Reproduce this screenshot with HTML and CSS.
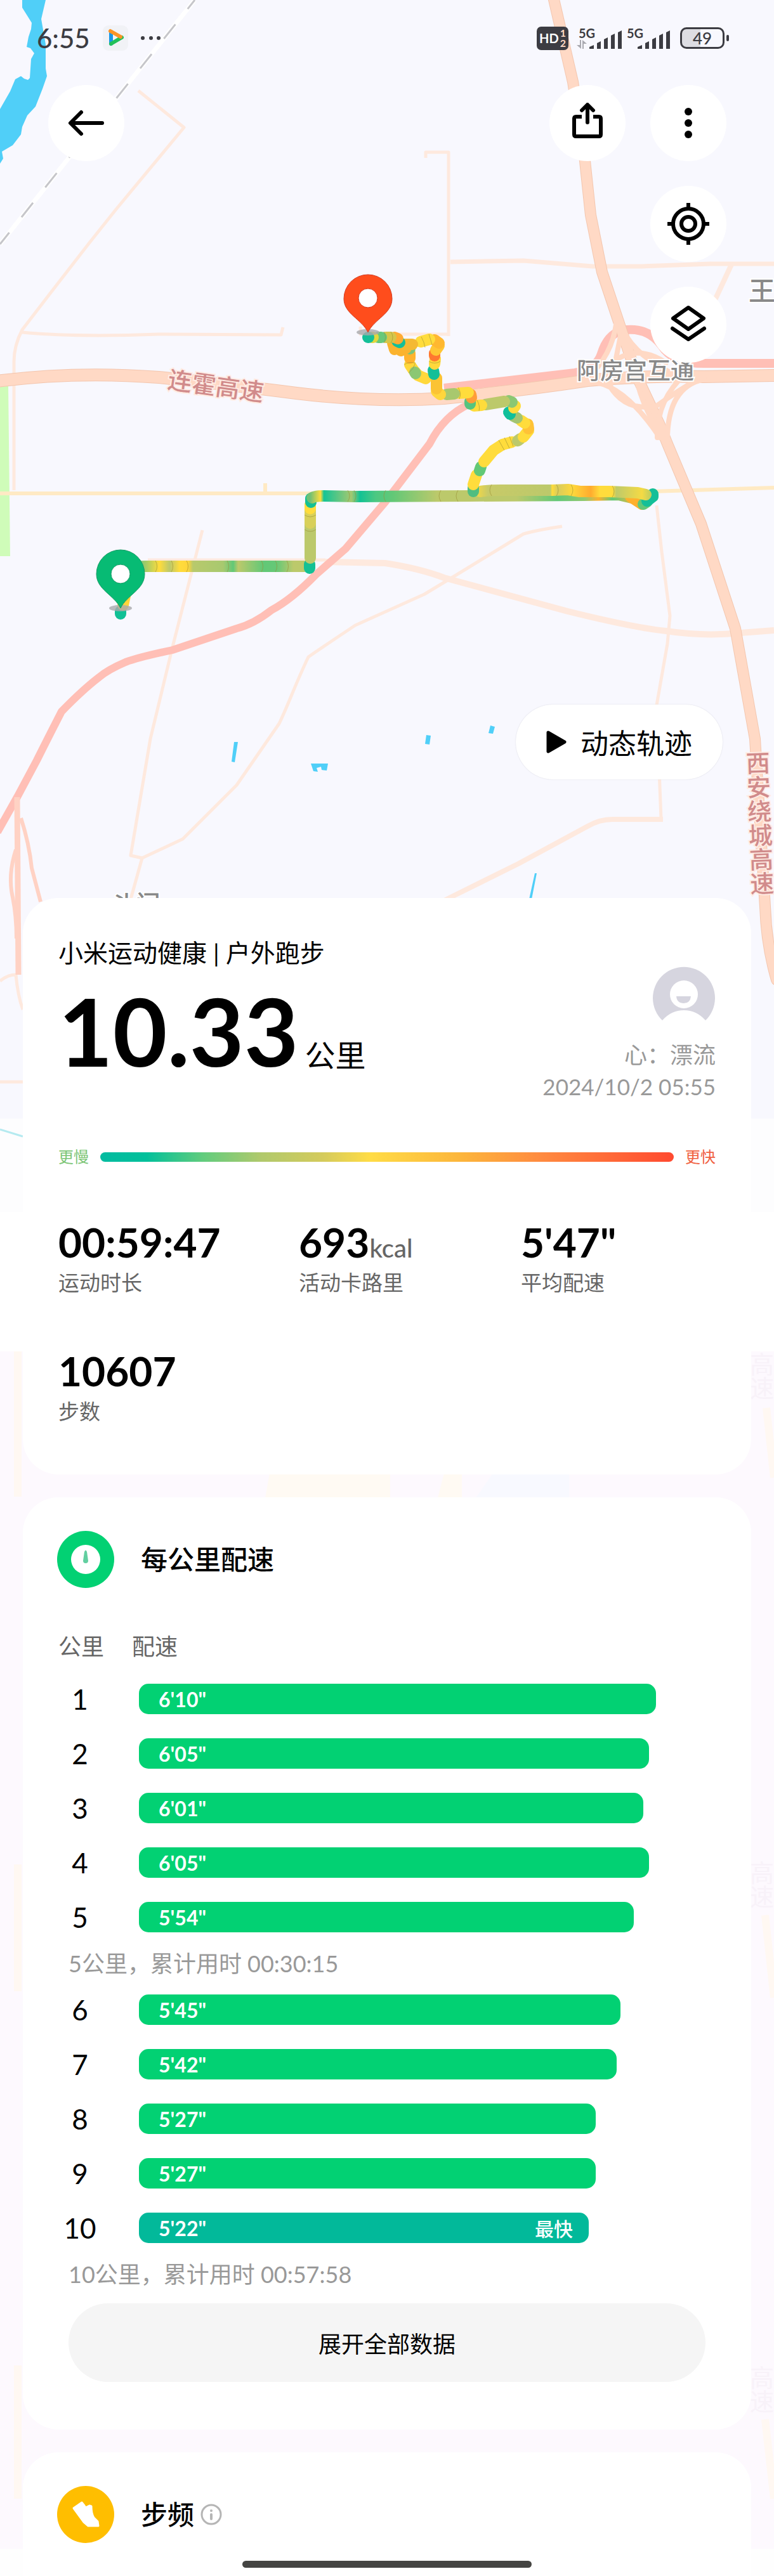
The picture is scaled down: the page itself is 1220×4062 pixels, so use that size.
FILE: index.html
```html
<!DOCTYPE html>
<html lang="zh-CN">
<head>
<meta charset="utf-8">
<meta name="viewport" content="width=device-width, initial-scale=1">
<title>户外跑步</title>
<link rel="stylesheet" href="styles.css">
</head>
<body>
<div class="page">
  <svg class="map" viewBox="0 0 1220 4062" aria-hidden="true">
    <rect width="1220" height="1764" fill="#f8f8fe"/>
    <rect y="1764" width="1220" height="147" fill="#fdfdfe"/>
    <rect y="1911" width="1220" height="220" fill="#fff"/>
    <rect y="2131" width="1220" height="1888" fill="#fdf9fe"/>
    <rect y="4019" width="1220" height="43" fill="#fefefe"/>

    <!-- faded tiles further down -->
    <g fill="none" stroke="#fff8f2" stroke-width="12">
      <path d="M28 2131V2360M28 2940V3140M28 3730V3940M1208 2220L1220 2330M1206 3020L1220 3150M1206 3815L1220 3940"/>
    </g>
    <path fill="#fffaf3" d="M425 2323H615V2362H418ZM700 2323H728V2362H690Z"/>
    <path fill="#f8f9ff" d="M777 2323H897V2362H750Z"/>
    <g class="ghost-label">
      <text x="1201" y="2132">高速</text>
      <text x="1201" y="2934">高速</text>
      <text x="1201" y="3730">高速</text>
    </g>

    <!-- water and park -->
    <path fill="#50cff8" d="M35 0V12L50 36 49 46 45 58 42 74 48 76 54 84 49 93 47 123 44 126 38 124 33 120 24 125 16 144 0 172V258L5 250 3 239 20 229 33 212 35 200 43 182 56 168 67 140 74 120 72 108V70L65 30 72 0Z"/>
    <path fill="#50cff8" d="M369 1170H375L370 1202 365 1201ZM490 1204H517L515 1215 507 1214 506 1209 499 1211 501 1217 494 1216ZM672 1159L679 1160 677 1174 670 1173ZM773 1144L780 1146 777 1157 770 1156ZM843 1377H846L838 1418H834Z"/>
    <path fill="none" stroke="#b5eaf0" stroke-width="3" d="M0 1781L36 1792"/>
    <path fill="#cffcb9" d="M0 606H13L16 877H0Z"/>

    <!-- railway -->
    <path d="M307 0L0 385" stroke="#fff" stroke-width="7"/>
    <path d="M307 0L0 385" stroke="#c6c6ca" stroke-width="3" stroke-dasharray="29 31" stroke-dashoffset="11"/>

    <!-- local roads -->
    <g fill="none" stroke="#fee9de" stroke-width="5" stroke-linejoin="round">
      <path d="M218 143L290 201 183 330 140 384 78 464 35 520Q22 545 22 570V773"/>
      <path d="M35 524Q120 532 250 527L443 528 446 516"/>
      <path d="M671 249V240H707V530M568 515V527H706"/>
      <path d="M710 413L825 411 934 420H1011L1120 416H1220" stroke-width="7"/>
      <path d="M1153 417L1126 475" stroke-width="8"/>
      <path d="M319 836L272 1020 237 1165 206 1349 224 1353 204 1425"/>
      <path d="M886 830Q845 836 825 842L712 911 669 937 560 986Q500 1026 486 1036C465 1080 455 1110 440 1141L373 1238 288 1323 224 1353"/>
      <path d="M233 883H513"/>
      <path d="M513 886L607 888Q660 896 700 911L895 964Q1000 990 1050 995 1110 1004 1167 998L1220 994" stroke-width="10"/>
      <path d="M1035 797L1043 870 1056 971 1052 1015 1035 1112 1042 1291"/>
      <path d="M1045 1292H965Q945 1292 926 1303L817 1362 700 1420" stroke-width="8"/>
      <path d="M0 1547Q12 1537 25 1537 28 1570 36 1592M0 1706H36"/>
    </g>
    <path fill="none" stroke="#ffeac4" stroke-width="6" d="M0 778H560L1027 775 1220 769M418 778V762"/>

    <!-- expressways -->
    <g fill="none" stroke="#ffbfb6">
      <path stroke-width="14" d="M700 612L906 588Q940 583 948 558 957 528 980 521 1020 514 1043 545 1060 573 1110 573H1220"/>
      <path stroke-width="12" d="M740 637Q700 655 677 700L607 792 545 865 498 906Q460 945 428 962 400 984 373 991L272 1025Q220 1036 198 1044 170 1056 156 1068 130 1088 97 1122 75 1165 58 1199L27 1257 -4 1312"/>
    </g>
    <g fill="none" stroke="#ffd2c4">
      <path stroke-width="9" d="M27 1257L29 1537"/>
      <path stroke-width="6" d="M33 1290Q46 1330 50 1369L64 1422M25 1340Q12 1380 20 1415 26 1445 26 1480"/>
    </g>
    <g fill="none" stroke="#f3c6ae" stroke-linecap="round">
      <path stroke-width="20" d="M-5 601Q120 585 250 595 350 605 467 620 590 635 700 628 820 616 926 600 1020 592 1110 594L1225 592"/>
      <path stroke-width="18" d="M872 -5L903 129 922 254 931 339 949 429 980 522 1004 594 1040 670 1052 700 1105 826 1159 991 1190 1165 1206 1430Q1208 1490 1224 1545"/>
    </g>
    <g fill="none" stroke="#ffd9c5" stroke-linecap="round">
      <path stroke-width="18" d="M-5 601Q120 585 250 595 350 605 467 620 590 635 700 628 820 616 926 600 1020 592 1110 594L1225 592"/>
      <path stroke-width="16" d="M872 -5L903 129 922 254 931 339 949 429 980 522 1004 594 1040 670 1052 700 1105 826 1159 991 1190 1165 1206 1430Q1208 1490 1224 1545"/>
      <g stroke-width="8">
        <path d="M972 505Q966 560 925 597M982 520Q1000 560 1062 590M962 575Q1000 540 1050 572M925 602Q980 600 1040 690M960 607Q985 650 1035 640 1070 615 1100 598"/>
        <path d="M1002 590Q1010 640 1050 700M1110 598Q1050 610 1052 700M1080 590Q1035 630 1036 690M978 530L962 610"/>
      </g>
    </g>

    <!-- place names -->
    <g class="map-label">
      <text x="909" y="598" font-size="37">阿房宫互通</text>
      <text x="1180" y="474" font-size="42">王</text>
      <text x="173" y="1441" font-size="40">斗门</text>
    </g>
    <g class="road-label">
      <text transform="translate(263 612) rotate(8)" font-size="38">连霍高速</text>
      <text class="vertical" transform="translate(1194 1184) rotate(-2)" font-size="38">西安绕城高速</text>
    </g>

    <!-- running track, coloured by pace -->
    <defs>
      <linearGradient id="seg1" gradientUnits="userSpaceOnUse" x1="225" y1="0" x2="489" y2="0">
        <stop offset="0" stop-color="#8ec870"/><stop offset=".1" stop-color="#ffdc3c"/><stop offset=".16" stop-color="#bcc96b"/><stop offset=".22" stop-color="#ffdc3c"/><stop offset=".27" stop-color="#ffd53a"/><stop offset=".3" stop-color="#b8c96c"/><stop offset=".48" stop-color="#a8c96f"/><stop offset=".54" stop-color="#62c877"/><stop offset=".57" stop-color="#bcc96b"/><stop offset=".72" stop-color="#62c877"/><stop offset=".8" stop-color="#66c877"/><stop offset=".9" stop-color="#bcc96b"/><stop offset="1" stop-color="#bcc96b"/>
      </linearGradient>
      <linearGradient id="seg2" gradientUnits="userSpaceOnUse" x1="489" y1="0" x2="1030" y2="0">
        <stop offset="0" stop-color="#70c075"/><stop offset=".03" stop-color="#ffdc3c"/><stop offset=".04" stop-color="#14c496"/><stop offset=".12" stop-color="#a4c870"/><stop offset=".145" stop-color="#12c294"/><stop offset=".19" stop-color="#4cc882"/><stop offset=".24" stop-color="#62c877"/><stop offset=".37" stop-color="#bcc96b"/><stop offset=".6" stop-color="#bcc96b"/><stop offset=".72" stop-color="#62c877"/><stop offset=".8" stop-color="#92c870"/><stop offset=".84" stop-color="#ffb02c"/><stop offset=".88" stop-color="#62c877"/><stop offset=".95" stop-color="#f5b83a"/><stop offset="1" stop-color="#14c094"/>
      </linearGradient>
      <linearGradient id="seg3" gradientUnits="userSpaceOnUse" x1="746" y1="0" x2="1035" y2="0">
        <stop offset="0" stop-color="#ffdc3c"/><stop offset=".08" stop-color="#c8ca68"/><stop offset=".42" stop-color="#bcc96b"/><stop offset=".43" stop-color="#ffdc3c"/><stop offset=".46" stop-color="#d8cc5c"/><stop offset=".54" stop-color="#ffd83c"/><stop offset=".64" stop-color="#ffab2e"/><stop offset=".69" stop-color="#ffdc3c"/><stop offset=".76" stop-color="#ffdc3c"/><stop offset=".78" stop-color="#bfca6a"/><stop offset=".92" stop-color="#f5da44"/><stop offset="1" stop-color="#9cc770"/>
      </linearGradient>
    </defs>
    <g class="track">
      <path stroke="#10c095" d="M190 968V964"/><path stroke="#ffd53a" d="M194 954L198 935"/>
      <path stroke="url(#seg1)" d="M200 910Q208 893 230 893L480 893"/>
      <path stroke="#14c094" d="M488 896V890"/>
      <path stroke="#bcc96b" d="M489 880V825"/><path stroke="#d8d05a" d="M489 825V802"/><path stroke="#ffdc3c" d="M489 802V796"/>
      <path stroke="#14c094" d="M490 792V786"/>
      <path stroke="url(#seg2)" d="M492 785Q495 782 510 782L560 783 740 782 920 781 975 780 1000 786"/>
      <path stroke="#ffb02c" d="M994 783L1012 795"/><path stroke="#62c877" d="M1014 795L1020 791"/>
      <path stroke="#14bf98" d="M1020 790L1029 783V779"/>
      <path stroke="url(#seg3)" d="M757 775Q770 773 790 773L871 773 895 772 914 775 960 775 1005 777 1018 780"/>
      <path stroke="#50bd80" d="M746 775V770"/><path stroke="#ffdc3c" d="M746 764L751 749"/>
      <path stroke="#62c877" d="M756 742L758 736"/><path stroke="#ffdc3c" d="M763 728L778 710 792 701 807 697"/>
      <path stroke="#bcc96b" d="M816 695L820 692"/><path stroke="#ffdc3c" d="M825 689L833 679"/>
      <path stroke="#ffc236" d="M833 676L832 669"/><path stroke="#ffdc3c" d="M827 667L821 663"/>
      <path stroke="#a2c472" d="M815 659L809 656"/><path stroke="#10bf9a" d="M804 653L802 650"/>
      <path stroke="#ffdc3c" d="M810 643L812 640"/><path stroke="#8bc773" d="M807 634L802 632"/>
      <path stroke="#bcc96b" d="M795 633L765 638"/><path stroke="#ffdc3c" d="M759 639L747 640"/>
      <path stroke="#56c47e" d="M741 637V633"/><path stroke="#ff9d38" d="M743 627L742 622"/>
      <path stroke="#ffdc3c" d="M738 619L724 620"/><path stroke="#a8c86e" d="M716 621L704 622"/>
      <path stroke="#ffd63c" d="M694 622L688 617"/><path stroke="#fbc334" d="M688 613V596"/>
      <path stroke="#ffd83c" d="M671 597L659 592 652 584 646 575"/><path stroke="#8bc773" d="M655 589L654 587"/>
      <path stroke="#ffb32e" d="M646 565V557"/><path stroke="#7cc478" d="M646 550V546"/>
      <path stroke="#fbb32e" d="M622 551L619 541M632 553L640 549"/>
      <path stroke="#14bf98" d="M684 590L683 584"/><path stroke="#ffd83c" d="M685 574L686 566"/>
      <path stroke="#ff7830" d="M685 561V557"/><path stroke="#ffc634" d="M687 552L692 545"/>
      <path stroke="#ffb830" d="M692 541L685 536"/><path stroke="#ffdc3c" d="M677 535L663 539"/>
      <path stroke="#f4b934" d="M650 543L636 543"/><path stroke="#14bf98" d="M630 540L626 538"/>
      <path stroke="#ffab32" d="M627 534L622 532"/><path stroke="#d5c64a" d="M616 532L608 532"/>
      <path stroke="#68c87a" d="M601 532L596 532"/><path stroke="#e0d83e" d="M588 532L586 532"/><path stroke="#14bf98" d="M581 532L580 532"/>
    </g>
    <g fill="none" stroke="#9a8f35" stroke-width="1" opacity=".6">
      <path d="M245 884q5 9 0 18M270 884q5 9 0 18M294 884q5 9 0 18M358 884q5 9 0 18M412 884q5 9 0 18M434 884q5 9 0 18M452 884q5 9 0 18M480 835q9 6 18 0M480 812q9 6 18 0M548 773q6 9 0 18M558 773q6 9 0 18M608 773q-6 9 0 18M695 773q-6 9 0 18M722 773q-6 9 0 18M775 764q-6 9 0 18M877 764q6 9 0 18M900 764q6 9 0 18M965 766q6 9 0 18M786 694l9 16M795 690l8 17M803 688l6 16M752 631q5 9 3 17M722 611q6 9 2 18M664 531q5 9 6 17M676 527q3 9 5 17M676 570q9 5 18 0M637 575q9-6 18-2M644 588q8-6 10-14M605 523q5 9 0 18M616 523q6 9 0 18"/>
    </g>

    <!-- pins -->
    <ellipse cx="190" cy="959" rx="18" ry="5" fill="#a9a9ad" opacity=".8"/>
    <path fill="#07bb74" stroke="#169a64" d="M190 959C180 938 152 930 152 905A38 38 0 0 1 228 905C228 930 200 938 190 959Z"/>
    <circle cx="190" cy="905" r="15" fill="#fff" stroke="#169a64"/>
    <ellipse cx="580" cy="524" rx="18" ry="5" fill="#a9a9ad" opacity=".8"/>
    <path fill="#ff4d1c" stroke="#d23c24" d="M580 524C570 503 542 495 542 471A38 38 0 0 1 618 471C618 495 590 503 580 524Z"/>
    <circle cx="580" cy="470" r="15" fill="#fff" stroke="#d23c24"/>
  </svg>

  <div class="hero">
    <div class="status">
      <span class="time">6:55</span>
      <svg width="40" height="40" viewBox="0 0 40 40" aria-hidden="true">
        <rect width="40" height="40" rx="9" fill="#f1f2f6"/>
        <path d="M13 10V29" stroke="#1897e8" stroke-width="6" stroke-linecap="round"/>
        <path d="M13 29L30 19" stroke="#22c05a" stroke-width="6" stroke-linecap="round"/>
        <path d="M12 9L28 18" stroke="#fb9426" stroke-width="6" stroke-linecap="round"/>
      </svg>
      <svg width="32" height="8" viewBox="0 0 32 8" fill="#3c3c42" aria-hidden="true"><circle cx="4" cy="4" r="3"/><circle cx="17" cy="4" r="3"/><circle cx="29" cy="4" r="3"/></svg>
      <span class="spacer"></span>
      <span class="hd">HD<span class="sims"><span>1</span><span>2</span></span></span>
      <span class="signal">
        <span class="net">5G</span>
        <svg width="72" height="36" viewBox="0 0 72 36" aria-hidden="true">
          <path fill="#a9a9b0" d="M5 21H7V35L0 29H5ZM9 35V21L16 27H11V35Z"/>
          <path fill="#3c3c42" d="M20 35V32L27 29V35ZM32 35V26L38 23V35ZM43 35V20L49 17V35ZM54 35V14L60 11V35ZM65 35V9L71 6V35Z"/>
        </svg>
      </span>
      <span class="signal">
        <span class="net">5G</span>
        <svg width="72" height="36" viewBox="0 0 72 36" aria-hidden="true">
          <path fill="#3c3c42" d="M20 35V32L27 29V35ZM32 35V26L38 23V35ZM43 35V20L49 17V35ZM54 35V14L60 11V35ZM65 35V9L71 6V35Z"/>
        </svg>
      </span>
      <span class="battery">49</span>
    </div>

    <div class="toolbar">
      <button class="round" aria-label="返回">
        <svg width="64" height="64" viewBox="0 0 64 64"><path d="M24 15L7 32 24 49M8 32H57" fill="none" stroke="#000" stroke-width="6" stroke-linecap="round" stroke-linejoin="round"/></svg>
      </button>
      <span class="spacer"></span>
      <button class="round" aria-label="分享">
        <svg width="64" height="64" viewBox="0 0 64 64" fill="none" stroke="#000" stroke-width="6"><path d="M23 22H14Q11 22 11 25V50Q11 53 14 53H50Q53 53 53 50V25Q53 22 50 22H41"/><path d="M32 31V4M23 12L32 3 41 12" stroke-linecap="round" stroke-linejoin="round"/></svg>
      </button>
      <div class="tools">
        <button class="round" aria-label="更多">
          <svg width="64" height="64" viewBox="0 0 64 64"><circle cx="32" cy="14" r="6"/><circle cx="32" cy="32" r="6"/><circle cx="32" cy="50" r="6"/></svg>
        </button>
        <button class="round" aria-label="定位">
          <svg width="68" height="68" viewBox="0 0 68 68" fill="none" stroke="#000" stroke-width="6"><circle cx="34" cy="34" r="24"/><circle cx="34" cy="34" r="11"/><path d="M34 1V10M34 58V67M1 34H10M58 34H67"/></svg>
        </button>
        <button class="round" aria-label="图层">
          <svg width="64" height="64" viewBox="0 0 64 64" fill="none" stroke="#000" stroke-width="6" stroke-linejoin="round"><path d="M32 5L56 22 32 39 8 22Z"/><path d="M7 38L32 55 57 38" stroke-linecap="round"/></svg>
        </button>
      </div>
    </div>

    <button class="replay">
      <svg width="32" height="36" viewBox="0 0 32 36" aria-hidden="true"><path d="M3 3L29 18 3 33Z" stroke="#000" stroke-width="5" stroke-linejoin="round"/></svg>
      动态轨迹
    </button>
  </div>

  <main class="cards">
    <section class="card summary">
      <div class="overview">
        <div>
          <h1 class="source">小米运动健康 | 户外跑步</h1>
          <p class="distance">10.33<span class="distance-unit">公里</span></p>
        </div>
        <div class="user">
          <svg class="avatar" width="100" height="100" viewBox="0 0 100 100" aria-hidden="true">
            <path fill="#d6d5df" d="M16 85A49 49 0 1 1 84 85Q70 69 50 69 30 69 16 85Z"/>
            <circle cx="50" cy="44" r="22" fill="#fff"/>
            <path fill="#d6d5df" d="M38 47H61Q60 58 50 58 39 58 38 47Z"/>
          </svg>
          <span>心：漂流</span>
          <time>2024/10/2 05:55</time>
        </div>
      </div>
      <div class="legend"><span class="slow">更慢</span><span class="scale"></span><span class="fast">更快</span></div>
      <dl class="stats">
        <div><dd>00:59:47</dd><dt>运动时长</dt></div>
        <div><dd>693<span class="unit">kcal</span></dd><dt>活动卡路里</dt></div>
        <div><dd>5'47"</dd><dt>平均配速</dt></div>
        <div><dd>10607</dd><dt>步数</dt></div>
      </dl>
    </section>

    <section class="card pace">
      <header class="card-head">
        <svg width="90" height="90" viewBox="0 0 90 90" aria-hidden="true"><circle cx="45" cy="45" r="45" fill="#02d173"/><circle cx="45" cy="45" r="23" fill="#fff"/><path fill="#62cfa0" d="M43 33Q45 28 47 33L49 47Q49 51 45 51 41 51 41 47Z"/></svg>
        <h2>每公里配速</h2>
      </header>
      <table class="splits">
        <thead><tr><th class="km" scope="col">公里</th><th scope="col">配速</th></tr></thead>
        <tbody>
          <tr><td>1</td><td><div class="bar" style="width:89.7%">6'10"</div></td></tr>
          <tr><td>2</td><td><div class="bar" style="width:88.4%">6'05"</div></td></tr>
          <tr><td>3</td><td><div class="bar" style="width:87.5%">6'01"</div></td></tr>
          <tr><td>4</td><td><div class="bar" style="width:88.4%">6'05"</div></td></tr>
          <tr><td>5</td><td><div class="bar" style="width:85.8%">5'54"</div></td></tr>
          <tr class="note"><td colspan="2">5公里，累计用时 00:30:15</td></tr>
          <tr><td>6</td><td><div class="bar" style="width:83.5%">5'45"</div></td></tr>
          <tr><td>7</td><td><div class="bar" style="width:82.8%">5'42"</div></td></tr>
          <tr><td>8</td><td><div class="bar" style="width:79.2%">5'27"</div></td></tr>
          <tr><td>9</td><td><div class="bar" style="width:79.2%">5'27"</div></td></tr>
          <tr><td>10</td><td><div class="bar best" style="width:78%">5'22"<span>最快</span></div></td></tr>
          <tr class="note"><td colspan="2">10公里，累计用时 00:57:58</td></tr>
        </tbody>
      </table>
      <button class="expand">展开全部数据</button>
    </section>

    <section class="card cadence">
      <header class="card-head">
        <svg width="90" height="90" viewBox="0 0 90 90" aria-hidden="true"><circle cx="45" cy="45" r="45" fill="#ffbe00"/><path fill="#fff" stroke="#fff" stroke-width="3" stroke-linejoin="round" d="M26 35L39 26 43 31 45 34 51 31 54 32Q54 44 58 50L64 56 65 63H49L42 57Z"/></svg>
        <h2>步频</h2>
        <svg class="info" width="34" height="34" viewBox="0 0 34 34" aria-hidden="true"><circle cx="17" cy="17" r="15" fill="none" stroke="#b5b5b5" stroke-width="3"/><circle cx="17" cy="11" r="2" fill="#b5b5b5"/><path d="M17 17V24" stroke="#b5b5b5" stroke-width="4" stroke-linecap="round"/></svg>
      </header>
    </section>
  </main>
  <div class="home-bar"></div>
</div>
</body>
</html>
```
FILE: styles.css
```css
* { box-sizing: border-box; }

body {
  margin: 0;
  background: #fefefe;
  color: #000;
  font-family: Lato, "Noto Sans CJK SC", sans-serif;
}

h1, h2, p, dl, dd { margin: 0; }
h1, h2 { font-weight: 400; }

button {
  border: 0;
  padding: 0;
  color: #000;
  font-family: inherit;
  cursor: pointer;
}

.page {
  position: relative;
  overflow: hidden;
}

/* the map lies behind everything */
.map {
  position: absolute;
  top: 0;
  left: 0;
  width: 100%;
  height: auto;
}

.map-label,
.road-label {
  font-family: "Noto Sans CJK SC", sans-serif;
  font-weight: 500;
  fill: #898989;
  stroke: #fff;
  stroke-width: 4;
  paint-order: stroke;
}

.road-label { fill: #d18b8b; stroke: #ffece4; }

.vertical { writing-mode: vertical-rl; }

.ghost-label {
  font-family: "Noto Sans CJK SC", sans-serif;
  font-size: 38px;
  fill: #f8f2f9;
  writing-mode: vertical-rl;
}

.track path {
  fill: none;
  stroke-width: 18;
  stroke-linecap: round;
  stroke-linejoin: round;
}

.hero {
  position: relative;
  display: flex;
  flex-direction: column;
}

.spacer { flex: 1; }

/* status bar */
.status {
  display: flex;
  align-items: center;
  height: 120px;
  padding: 0 71px 0 58px;
  color: #3c3c42;
}

.time {
  margin-right: 20px;
  font-size: 42px;
  font-weight: 500;
}

.time + svg { margin-right: 19px; }

.hd {
  display: flex;
  align-items: center;
  gap: 2px;
  height: 37px;
  padding: 0 4px;
  border-radius: 7px;
  background: #3c3c42;
  color: #fff;
  font-size: 20px;
  font-weight: 700;
}

.sims {
  display: flex;
  flex-direction: column;
  color: #ffd9c5;
  font-size: 16px;
  line-height: 16px;
}

.signal {
  display: grid;
  margin-left: 4px;
}

.hd + .signal { margin-left: 13px; }

.signal > * { grid-area: 1 / 1; }

.net {
  padding-left: 3px;
  font-size: 20px;
  font-weight: 700;
  line-height: 20px;
}

.battery {
  display: flex;
  align-items: center;
  justify-content: center;
  position: relative;
  width: 70px;
  height: 34px;
  margin: 0 7px 0 15px;
  border: 3px solid #3c3c42;
  border-radius: 10px;
  background: linear-gradient(90deg, #dddde2 45%, #f8f8fe 45%);
  font-size: 26px;
  font-weight: 500;
}

.battery::after {
  content: "";
  position: absolute;
  right: -10px;
  width: 4px;
  height: 10px;
  border-radius: 2px;
  background: #3c3c42;
}

/* map controls */
.toolbar {
  display: flex;
  align-items: flex-start;
  padding: 14px 75px 0 76px;
}

.tools {
  display: flex;
  flex-direction: column;
  gap: 39px;
  margin-left: 39px;
}

.round {
  display: grid;
  place-items: center;
  width: 120px;
  height: 120px;
  border-radius: 50%;
  background: #fff;
}

.replay {
  display: flex;
  align-items: center;
  gap: 22px;
  align-self: flex-end;
  height: 118px;
  margin: 539px 81px 187px 0;
  padding: 0 48px;
  border-radius: 59px;
  background: #fff;
  box-shadow: 0 0 2px #d8d8e0;
  font-size: 44px;
}

/* cards */
.cards {
  position: relative;
  display: flex;
  flex-direction: column;
  gap: 36px;
  margin: 0 36px;
}

.card {
  padding: 53px 56px 75px;
  border-radius: 56px;
  background: #fff;
}

.summary { padding: 58px 56px 78px; }

.overview {
  display: flex;
  justify-content: space-between;
}

.source {
  font-size: 39px;
  line-height: 56px;
}

.distance {
  font-size: 148px;
  font-weight: 700;
  line-height: 190px;
}

.distance-unit {
  margin-left: 10px;
  font-size: 48px;
  font-weight: 400;
  line-height: 48px;
}

.user {
  display: flex;
  flex-direction: column;
  align-items: flex-end;
  padding-top: 50px;
  color: #999;
  font-size: 36px;
  line-height: 50px;
}

.user > * { flex: none; }

.avatar { margin-bottom: 14px; }

.user span { height: 50px; }

.user time {
  height: 50px;
  font-size: 35px;
}

.legend {
  display: flex;
  align-items: center;
  gap: 18px;
  margin-top: 70px;
  font-size: 24px;
  line-height: 32px;
}

.slow { color: #7cc576; }
.fast { color: #f0603f; }

.scale {
  flex: 1;
  height: 15px;
  border-radius: 8px;
  background: linear-gradient(90deg, #02bba0, #02c09b 8%, #62cc7d 18%, #b0c96c 28%, #d5cb5c 39%, #ffdc46 47%, #fcb53c 63%, #ff8a40 77%, #ff4a30);
}

.stats {
  display: grid;
  grid-template-columns: 379fr 350fr 307fr;
  row-gap: 83px;
  margin-top: 84px;
}

.stats > div {
  display: flex;
  flex-direction: column;
  gap: 6px;
}

.stats dd {
  font-size: 64px;
  font-weight: 700;
  line-height: 70px;
}

.stats dt {
  color: #666;
  font-size: 33px;
  line-height: 44px;
}

.stats .unit {
  color: #666;
  font-size: 40px;
  font-weight: 500;
  line-height: 40px;
}

.card-head {
  display: flex;
  align-items: center;
  margin-left: -2px;
}

.card-head h2 {
  margin-left: 42px;
  font-size: 42px;
  font-weight: 500;
  line-height: 60px;
}

.info { margin-left: 10px; }

/* pace table */
.splits {
  width: 100%;
  margin-top: 52px;
  table-layout: fixed;
  border-collapse: collapse;
}

.splits th,
.splits td { padding: 0; }

.splits th {
  height: 80px;
  color: #666;
  font-size: 36px;
  font-weight: 400;
  line-height: 50px;
  text-align: left;
}

.splits .km { width: 116px; }

.splits td {
  height: 86px;
  padding-left: 11px;
}

.splits td:first-child {
  padding: 0 48px 0 0;
  font-size: 44px;
  text-align: center;
}

.splits .note td {
  height: 60px;
  padding-left: 16px;
  color: #999;
  font-size: 36px;
  line-height: 50px;
  text-align: left;
}

.bar {
  display: flex;
  align-items: center;
  justify-content: space-between;
  height: 48px;
  padding: 0 25px 0 31px;
  border-radius: 15px;
  background: #02d173;
  color: #fff;
  font-size: 32px;
  font-weight: 700;
}

.bar.best { background: #02b99a; }

.bar span {
  font-size: 30px;
  font-weight: 500;
}

.expand {
  display: block;
  width: calc(100% - 32px);
  height: 124px;
  margin: 16px 16px 0;
  border-radius: 62px;
  background: #f5f5f5;
  font-size: 36px;
}

.cadence {
  padding-bottom: 52px;
  border-radius: 56px 56px 0 0;
}

.home-bar {
  position: absolute;
  bottom: 13px;
  left: 50%;
  width: 456px;
  height: 11px;
  margin-left: -228px;
  border-radius: 6px;
  background: #444442;
}
```
